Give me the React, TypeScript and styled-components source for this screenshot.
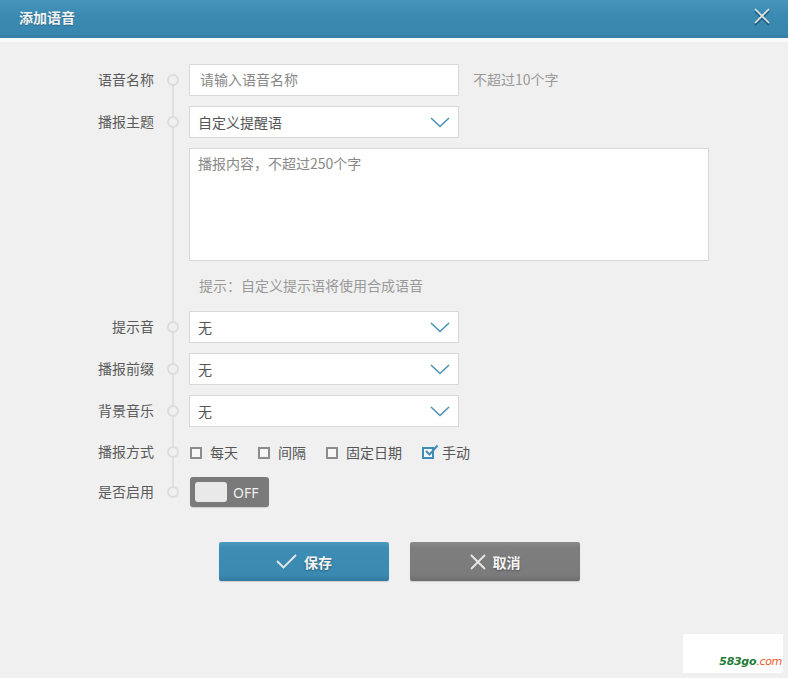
import React from "react";
import styled, { createGlobalStyle } from "styled-components";

const Global = createGlobalStyle`
  html, body { margin: 0; padding: 0; background: #f0f0f0; }
  body { font-family: "Noto Sans CJK SC", "Noto Sans", sans-serif; }
  * { box-sizing: border-box; }
`;

const Page = styled.div`
  width: 788px;
  height: 678px;
  background: #f0f0f0;
  position: relative;
  overflow: hidden;
`;

const Header = styled.div`
  height: 42px;
  background: linear-gradient(180deg, #4895bc 0%, #3b8ab2 40%, #3886ae 100%);
  border-bottom: 4px solid #fafafa;
  box-shadow: inset 0 -3px 0 #3580a6;
  display: flex;
  align-items: center;
  justify-content: space-between;
  padding: 0 16px 0 19px;
`;

const Title = styled.div`
  color: #f2f2f2;
  font-size: 14px;
  font-weight: 700;
  text-shadow: 0 1px 1px rgba(0, 0, 0, 0.25);
  margin-top: -4px;
`;

const CloseBtn = styled.div`
  width: 20px;
  height: 20px;
  margin-top: -4px;
  display: flex;
  align-items: center;
  justify-content: center;
`;

const Form = styled.div`
  padding: 22px 0 0 84px;
`;

const Fields = styled.div`
  position: relative;
  display: flex;
  flex-direction: column;
  gap: 10px;
`;

const Line = styled.div`
  position: absolute;
  left: 88px;
  top: 15px;
  bottom: 15px;
  width: 2px;
  background: #e0e0e0;
`;

const Row = styled.div<{ $h?: number }>`
  display: flex;
  align-items: center;
  min-height: ${(p) => p.$h ?? 32}px;
  position: relative;
`;

const Label = styled.div`
  width: 70px;
  text-align: right;
  font-size: 14px;
  color: #5a5a5a;
  white-space: nowrap;
  margin-top: -2px;
`;

const DotCol = styled.div`
  width: 35px;
  padding-left: 13px;
  display: flex;
  align-items: center;
`;

const Dot = styled.div`
  width: 12px;
  height: 12px;
  border-radius: 50%;
  border: 2px solid #dcdcdc;
  background: #f0f0f0;
`;

const Input = styled.div`
  width: 270px;
  height: 32px;
  background: #fff;
  border: 1px solid #d8d8d8;
  display: flex;
  align-items: center;
  padding: 0 10px 2px;
  font-size: 14px;
  color: #888;
`;

const Select = styled(Input)`
  color: #555;
  padding: 0 8px 0 8px;
  justify-content: space-between;
`;

const TextArea = styled.div`
  width: 520px;
  height: 113px;
  background: #fff;
  border: 1px solid #d8d8d8;
  padding: 4px 8px;
  font-size: 14px;
  color: #888;
`;

const Note = styled.div<{ $ml?: number }>`
  font-size: 14px;
  color: #999;
  margin-left: ${(p) => p.$ml ?? 0}px;
  margin-top: -2px;
`;

const Checks = styled.div`
  display: flex;
  align-items: center;
  gap: 20px;
  margin-left: 1px;
`;

const CheckItem = styled.div`
  display: flex;
  align-items: center;
  gap: 8px;
  font-size: 14px;
  color: #555;
`;

const Box = styled.div<{ $on?: boolean }>`
  width: 12px;
  height: 12px;
  border: 2px solid ${(p) => (p.$on ? "#3d8db5" : "#8c8c8c")};
  position: relative;
  background: #f7f7f7;
  margin-top: 1px;
`;

const Tick = styled.svg`
  position: absolute;
  left: 1px;
  top: -5px;
`;

const Toggle = styled.div`
  width: 79px;
  height: 30px;
  margin-left: 1px;
  background: #7a7a7a;
  border-radius: 3px;
  display: flex;
  align-items: center;
  padding-left: 5px;
  gap: 6px;
  box-shadow: 0 1px 1px rgba(0, 0, 0, 0.15);
`;

const Knob = styled.div`
  width: 32px;
  height: 20px;
  background: #e9e9e9;
  border-radius: 3px;
`;

const ToggleText = styled.span`
  color: #f0f0f0;
  font-size: 14px;
  font-family: "Noto Sans", "Open Sans", sans-serif;
`;

const Actions = styled.div`
  display: flex;
  gap: 21px;
  padding-left: 219px;
  margin-top: 35px;
`;

const Button = styled.div<{ $kind: "primary" | "gray" }>`
  width: 170px;
  height: 39px;
  border-radius: 2px;
  display: flex;
  align-items: center;
  justify-content: center;
  gap: 7px;
  font-size: 14px;
  font-weight: 700;
  color: #f4f4f4;
  text-shadow: 0 1px 2px rgba(0, 0, 0, 0.35);
  background: ${(p) =>
    p.$kind === "primary"
      ? "linear-gradient(180deg, #4b9ac0 0%, #3d8db5 15%, #3a89b1 85%, #33799e 100%)"
      : "linear-gradient(180deg, #8a8a8a 0%, #7e7e7e 15%, #7b7b7b 85%, #6c6c6c 100%)"};
  box-shadow: 0 1px 1px rgba(0, 0, 0, 0.15);
`;

const Watermark = styled.div`
  position: absolute;
  left: 683px;
  top: 634px;
  width: 100px;
  height: 39px;
  background: #fff;
  display: flex;
  align-items: flex-end;
  justify-content: flex-end;
  padding: 0 1px 5px 0;
  font-family: "DejaVu Sans", sans-serif;
  font-size: 11px;
  font-style: italic;
  letter-spacing: -0.3px;
`;

const Green = styled.span`
  color: #1c7a34;
  font-weight: 700;
`;
const Orange = styled.span`
  color: #ee5a2a;
`;

const Chevron = () => (
  <svg width="20" height="11" viewBox="0 0 20 11">
    <path d="M1 1 L10 9.5 L19 1" fill="none" stroke="#4b92b6" strokeWidth="1.6" />
  </svg>
);

const Checkbox = ({ label, on }: { label: string; on?: boolean }) => (
  <CheckItem>
    <Box $on={on}>
      {on && (
        <Tick width="14" height="13" viewBox="0 0 14 13">
          <path d="M1 7 L4.5 10.5 L12.5 1.5" fill="none" stroke="#3d8db5" strokeWidth="2" />
        </Tick>
      )}
    </Box>
    {label}
  </CheckItem>
);

export default function App() {
  return (
    <Page>
      <Global />
      <Header>
        <Title>添加语音</Title>
        <CloseBtn>
          <svg width="20" height="20" viewBox="0 0 20 20">
            <path d="M3 4 L17 18 M17 4 L3 18" stroke="rgba(20,70,100,0.6)" strokeWidth="2" />
            <path d="M3 2 L17 16 M17 2 L3 16" stroke="#e4e4e4" strokeWidth="1.6" />
          </svg>
        </CloseBtn>
      </Header>
      <Form>
        <Fields>
          <Line />
          <Row>
            <Label>语音名称</Label>
            <DotCol><Dot /></DotCol>
            <Input>请输入语音名称</Input>
            <Note $ml={14}>不超过10个字</Note>
          </Row>
          <Row>
            <Label>播报主题</Label>
            <DotCol><Dot /></DotCol>
            <Select>自定义提醒语<Chevron /></Select>
          </Row>
          <Row>
            <Label />
            <DotCol />
            <TextArea>播报内容，不超过250个字</TextArea>
          </Row>
          <Row $h={30}>
            <Label />
            <DotCol />
            <Note $ml={10}>提示：自定义提示语将使用合成语音</Note>
          </Row>
          <Row>
            <Label>提示音</Label>
            <DotCol><Dot /></DotCol>
            <Select>无<Chevron /></Select>
          </Row>
          <Row>
            <Label>播报前缀</Label>
            <DotCol><Dot /></DotCol>
            <Select>无<Chevron /></Select>
          </Row>
          <Row>
            <Label>背景音乐</Label>
            <DotCol><Dot /></DotCol>
            <Select>无<Chevron /></Select>
          </Row>
          <Row $h={30}>
            <Label>播报方式</Label>
            <DotCol><Dot /></DotCol>
            <Checks>
              <Checkbox label="每天" />
              <Checkbox label="间隔" />
              <Checkbox label="固定日期" />
              <Checkbox label="手动" on />
            </Checks>
          </Row>
          <Row $h={30}>
            <Label>是否启用</Label>
            <DotCol><Dot /></DotCol>
            <Toggle>
              <Knob />
              <ToggleText>OFF</ToggleText>
            </Toggle>
          </Row>
        </Fields>
      </Form>
      <Actions>
        <Button $kind="primary">
          <svg width="21" height="15" viewBox="0 0 21 15">
            <path d="M1 7 L7.5 13.5 L20 1" fill="none" stroke="#e8e8e8" strokeWidth="1.8" />
          </svg>
          保存
        </Button>
        <Button $kind="gray">
          <svg width="16" height="16" viewBox="0 0 16 16">
            <path d="M1 1 L15 15 M15 1 L1 15" stroke="#e8e8e8" strokeWidth="1.8" />
          </svg>
          取消
        </Button>
      </Actions>
      <Watermark>
        <Green>583go</Green>
        <Orange>.com</Orange>
      </Watermark>
    </Page>
  );
}
